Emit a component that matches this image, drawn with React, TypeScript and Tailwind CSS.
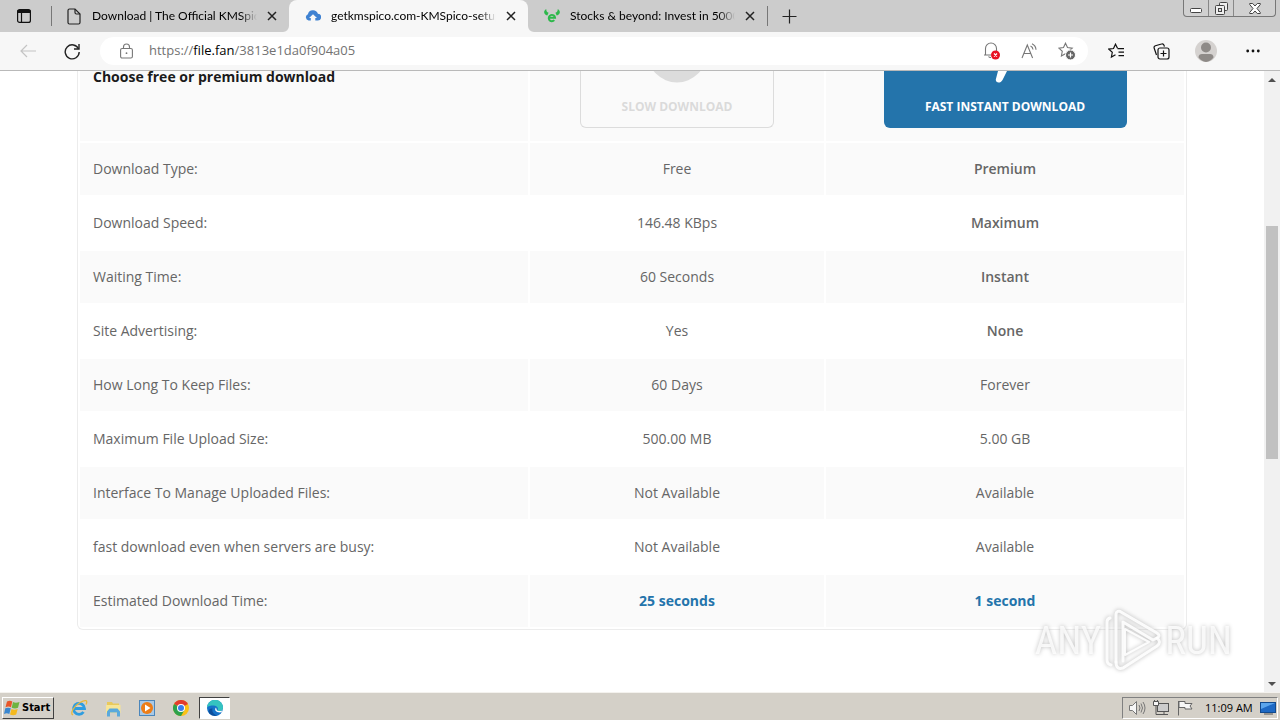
import type { ReactNode } from 'react';

type Row = { label: string; free: string; premium: string; tone?: 'bold' | 'link' };

const rows: Row[] = [
  { label: 'Download Type:', free: 'Free', premium: 'Premium', tone: 'bold' },
  { label: 'Download Speed:', free: '146.48 KBps', premium: 'Maximum', tone: 'bold' },
  { label: 'Waiting Time:', free: '60 Seconds', premium: 'Instant', tone: 'bold' },
  { label: 'Site Advertising:', free: 'Yes', premium: 'None', tone: 'bold' },
  { label: 'How Long To Keep Files:', free: '60 Days', premium: 'Forever' },
  { label: 'Maximum File Upload Size:', free: '500.00 MB', premium: '5.00 GB' },
  { label: 'Interface To Manage Uploaded Files:', free: 'Not Available', premium: 'Available' },
  { label: 'fast download even when servers are busy:', free: 'Not Available', premium: 'Available' },
  { label: 'Estimated Download Time:', free: '25 seconds', premium: '1 second', tone: 'link' },
];

function CloseIcon() {
  return (
    <svg width="10" height="10" viewBox="0 0 10 10" stroke="#222" strokeWidth="1.5">
      <path d="M1 1l8 8M9 1l-8 8" />
    </svg>
  );
}

function Tab({ icon, title, active }: { icon: ReactNode; title: string; active?: boolean }) {
  return (
    <div
      role="tab"
      aria-selected={!!active}
      className={
        active
          ? 'relative flex h-8 w-[239px] items-center rounded-t-lg bg-[#f7f7f7] pr-2.5 pl-4'
          : 'flex h-8 w-[237px] items-center pr-2.5 pl-3.5 last:w-[239px] last:pl-4'
      }
    >
      {active && (
        <>
          <svg className="absolute bottom-0 -left-1.5" width="6" height="6" viewBox="0 0 6 6">
            <path d="M6 0v6H0a6 6 0 0 0 6-6z" fill="#f7f7f7" />
          </svg>
          <svg className="absolute -right-1.5 bottom-0" width="6" height="6" viewBox="0 0 6 6">
            <path d="M0 0v6h6a6 6 0 0 1-6-6z" fill="#f7f7f7" />
          </svg>
        </>
      )}
      <span className="flex w-4 shrink-0 justify-center">{icon}</span>
      <span className="ml-2.5 min-w-0 flex-1 overflow-hidden mask-r-from-90% font-[Lato,'Open_Sans',sans-serif] text-xs whitespace-nowrap">
        {title}
      </span>
      <button aria-label="Close tab" className="ml-2 shrink-0 p-0.5">
        <CloseIcon />
      </button>
    </div>
  );
}

function TabStrip() {
  return (
    <div className="flex h-8 items-center bg-[#cccccc] text-black">
      <button aria-label="Tab actions" className="flex w-[51px] justify-center pr-1">
        <svg width="16" height="16" viewBox="0 0 16 16" fill="none" stroke="#111">
          <rect x="1.6" y="1.6" width="12.8" height="12.8" rx="2" strokeWidth="1.2" />
          <path d="M1.5 3.5h13" strokeWidth="3" />
          <path d="M5.5 4v10.5" strokeWidth="1.2" />
        </svg>
      </button>
      <div className="h-5 w-px bg-[#777]" />
      <div role="tablist" className="flex">
        <Tab
          title="Download | The Official KMSpico"
          icon={
            <svg width="14" height="17" viewBox="0 0 14 17" fill="none" stroke="#222" strokeWidth="1.2">
              <path d="M2.5 1h5.5l5 5v8.5a1.5 1.5 0 0 1-1.5 1.5h-9A1.5 1.5 0 0 1 1 14.500V2.500A1.500 1.500 0 0 1 2.500 1z" />
              <path d="M8 1v3.500A1.500 1.500 0 0 0 9.500 6H13" />
            </svg>
          }
        />
        <Tab
          active
          title="getkmspico.com-KMSpico-setup"
          icon={
            <svg width="16" height="12" viewBox="0 0 16 12">
              <path d="M5.800 10.500H3.600A3.300 3.300 0 0 1 2.900 4.200 5.200 5.200 0 0 1 12.900 3.700 3.400 3.400 0 0 1 12.600 10.500h-2.300V8h1.700L8 4.300 4.100 8h1.700z" fill="#3f82d2" />
            </svg>
          }
        />
        <Tab
          title="Stocks & beyond: Invest in 5000+"
          icon={
            <svg width="16" height="14" viewBox="0 0 16 14">
              <path d="M2.200 0C-.7 2-.7 5 3.300 6.500l1.300-2.700C3 3.300 2.200 2 2.200 0zM13.800 0c2.900 2 2.900 5-1.100 6.500l-1.300-2.700c1.600-.5 2.400-1.800 2.400-3.800z" fill="#2db84b" />
              <path d="M5 8.800h6.100A3.200 3.200 0 1 0 10.300 11.200" fill="none" stroke="#2db84b" strokeWidth="1.900" />
            </svg>
          }
        />
      </div>
      <div className="h-5 w-px bg-[#777]" />
      <button aria-label="New tab" className="ml-3.5">
        <svg width="15" height="15" viewBox="0 0 15 15" stroke="#222" strokeWidth="1.2">
          <path d="M7.500 0.500v14M.5 7.500h14" />
        </svg>
      </button>
      <div className="mr-1 ml-auto flex h-[17px] w-[93px] self-start rounded-b border border-t-0 border-[#777] bg-[#d0d0d0]">
        <button aria-label="Minimize" className="flex w-[25px] items-center justify-center border-r border-[#888] pt-1">
          <svg width="12" height="5" viewBox="0 0 12 5">
            <rect x=".5" y=".5" width="11" height="4" rx="1" fill="#fff" stroke="#444" />
          </svg>
        </button>
        <button aria-label="Restore" className="flex w-[25px] items-center justify-center border-r border-[#888]">
          <svg width="13" height="13" viewBox="0 0 13 13" fill="#eee" stroke="#444">
            <rect x="4.500" y=".5" width="8" height="8" rx="1" />
            <rect x=".5" y="3.500" width="9" height="9" rx="1" />
            <rect x="3.500" y="6.500" width="3" height="3" fill="#ddd" />
          </svg>
        </button>
        <button aria-label="Close" className="flex flex-1 items-center justify-center">
          <svg width="12" height="11" viewBox="0 0 12 11" fill="#fff" stroke="#444">
            <path d="M.7.500h3L6 3 8.300.5h3v1L8 5.500l3.300 4v1h-3L6 8l-2.300 2.500h-3v-1L4 5.500.7 1.500z" />
          </svg>
        </button>
      </div>
    </div>
  );
}

const star = 'M7.500 1.200l2 4.300 4.700.6-3.500 3.200.9 4.700-4.100-2.300L3.400 14l.9-4.700L.8 6.100l4.700-.6z';

function Toolbar() {
  return (
    <div className="flex h-[39px] items-center border-b border-[#b9b9b9] bg-[#f7f7f7] pl-5">
      <button aria-label="Back" disabled>
        <svg width="16" height="14" viewBox="0 0 16 14" fill="none" stroke="#c4c4c4" strokeWidth="1.200">
          <path d="M16 7H1M7 1L1 7l6 6" />
        </svg>
      </button>
      <button aria-label="Refresh" className="ml-7">
        <svg width="16" height="17" viewBox="0 0 16 17" fill="none" stroke="#222" strokeWidth="1.400">
          <path d="M14.600 6A7 7 0 1 0 15.200 9" />
          <path d="M15 1v5h-5" />
        </svg>
      </button>
      <div className="ml-5 flex h-7 flex-1 items-center rounded-full bg-white pr-3 pl-5">
        <svg width="13" height="16" viewBox="0 0 13 16" fill="none" stroke="#777" strokeWidth="1.100">
          <rect x=".6" y="5.500" width="11.800" height="9.500" rx="1.500" />
          <path d="M3.500 5.500V4a3 3 0 0 1 6 0v1.500" />
          <circle cx="6.500" cy="10.200" r=".9" fill="#777" stroke="none" />
        </svg>
        <a href="https://file.fan/3813e1da0f904a05" className="ml-4 text-[13px] text-[#737373]">
          https://<span className="text-black">file.fan</span>/3813e1da0f904a05
        </a>
        <button aria-label="Notifications blocked" className="ml-auto">
          <svg width="18" height="18" viewBox="0 0 18 18" fill="none">
            <path d="M2.500 12.500V6.500a5.500 5.500 0 0 1 11 0v4M1 13h7M5.500 14.500A2.500 2.500 0 0 0 8 15.500" stroke="#777" strokeWidth="1.100" />
            <circle cx="12.500" cy="13" r="4.500" fill="#e81123" />
            <path d="M11 11.500l3 3M14 11.500l-3 3" stroke="#fff" strokeWidth="1.200" />
          </svg>
        </button>
        <button aria-label="Read aloud" className="ml-5">
          <svg width="17" height="16" viewBox="0 0 17 16" fill="none" stroke="#777" strokeWidth="1.100">
            <path d="M1 15L6.300 2 11.600 15M2.800 10.500h7M9.500 3a4 4 0 0 1 2.500 3.500M11 .8a7 7 0 0 1 4 6" />
          </svg>
        </button>
        <button aria-label="Add to favorites" className="ml-5">
          <svg width="18" height="18" viewBox="0 0 18 18" fill="none">
            <path d={star} stroke="#777" strokeWidth="1.100" />
            <circle cx="12.500" cy="13" r="5" fill="#666" stroke="#fff" />
            <path d="M12.500 10.500v5M10 13h5" stroke="#fff" strokeWidth="1.200" />
          </svg>
        </button>
      </div>
      <div className="flex items-center pr-5 pl-5">
        <button aria-label="Favorites">
          <svg width="17" height="16" viewBox="0 0 17 16" fill="none" stroke="#111" strokeWidth="1.200">
            <path d="M9.500 5.300L7.500 1.200l-2 4.300-4.700.6 3.500 3.200-.9 4.700 4.100-2.300" />
            <path d="M9.500 5.600H16M10.500 9.100H16M10.500 12.600H16" />
          </svg>
        </button>
        <button aria-label="Collections" className="ml-7">
          <svg width="17" height="17" viewBox="0 0 17 17" fill="none" stroke="#111" strokeWidth="1.200">
            <path d="M3.500 12L1.200 5.200a2 2 0 0 1 1.200-2.500L8.500 1a2 2 0 0 1 2.500 1.200l.4 1.400" />
            <rect x="5" y="5" width="11" height="11" rx="2" />
            <path d="M10.500 7.500v6M7.500 10.500h6" />
          </svg>
        </button>
        <button aria-label="Profile" className="ml-6">
          <svg width="24" height="24" viewBox="0 0 24 24">
            <circle cx="12" cy="12" r="11" fill="#d5d2d0" />
            <circle cx="12" cy="8.500" r="5" fill="#8e8a87" />
            <path d="M4.500 18.500C4.500 16 6 15 8 15h8c2 0 3.500 1 3.500 3.500A11 11 0 0 1 12 23a11 11 0 0 1-7.500-4.500z" fill="#8e8a87" />
          </svg>
        </button>
        <button aria-label="Settings and more" className="ml-7">
          <svg width="14" height="4" viewBox="0 0 14 4" fill="#111">
            <circle cx="1.700" cy="2" r="1.400" />
            <circle cx="7" cy="2" r="1.400" />
            <circle cx="12.300" cy="2" r="1.400" />
          </svg>
        </button>
      </div>
    </div>
  );
}

function CompareTable() {
  return (
    <div className="mx-auto max-w-[1110px] rounded-b-md border border-t-0 border-[#ececec] bg-white">
      <table className="-mt-0.5 w-full table-fixed border-separate border-spacing-0.5 text-sm text-[#666]">
        <colgroup>
          <col />
          <col className="w-[294px]" />
          <col className="w-[358px]" />
        </colgroup>
        <thead>
          <tr className="h-[70px]">
            <th scope="col" className="bg-[#fafafa] pl-[13px] text-left align-top leading-3 font-bold text-[#1b1b1b]">
              Choose free or premium download
            </th>
            <th scope="col" className="bg-[#fafafa] p-0 align-top">
              <button className="inline-flex h-[57px] w-[194px] flex-col items-center rounded-b-md border border-t-0 border-[#dcdcdc] align-top text-xs font-bold text-[#dadada]">
                <svg width="60" height="12" viewBox="0 18 60 12">
                  <circle cx="30" cy="0" r="29.500" fill="#dcdcdc" />
                </svg>
                <span className="mt-4 leading-4">SLOW DOWNLOAD</span>
              </button>
            </th>
            <th scope="col" className="bg-[#fafafa] p-0 align-top">
              <button className="inline-flex h-[57px] w-[243px] flex-col items-center rounded-b-md bg-[#2474ab] align-top text-xs font-bold text-white">
                <svg width="30" height="12" viewBox="0 0 30 12">
                  <path d="M8 0h9l-4.500 9C10.800 12.500 5.500 12.500 5.800 8.500z" fill="#fff" />
                </svg>
                <span className="mt-4 leading-4">FAST INSTANT DOWNLOAD</span>
              </button>
            </th>
          </tr>
        </thead>
        <tbody>
          {rows.map(({ label, free, premium, tone }) => (
            <tr key={label} className="h-[52px] odd:bg-[#fafafa]">
              <td className="p-0 pl-[13px]">{label}</td>
              <td className={tone === 'link' ? 'p-0 text-center font-bold text-[#2474ab]' : 'p-0 text-center'}>{free}</td>
              <td
                className={
                  tone === 'link'
                    ? 'p-0 text-center font-bold text-[#2474ab]'
                    : tone === 'bold'
                      ? 'p-0 text-center font-semibold'
                      : 'p-0 text-center'
                }
              >
                {premium}
              </td>
            </tr>
          ))}
        </tbody>
      </table>
    </div>
  );
}

function Scrollbar() {
  return (
    <div className="flex w-4 shrink-0 flex-col bg-[#f1f1f1]">
      <button aria-label="Scroll up" className="flex h-[17px] items-center justify-center">
        <svg width="8" height="4" viewBox="0 0 8 4"><path d="M0 4l4-4 4 4z" fill="#505050" /></svg>
      </button>
      <div className="flex-1 px-0.5 pt-[138px]">
        <div className="h-[233px] bg-[#c1c1c1]" />
      </div>
      <button aria-label="Scroll down" className="flex h-[17px] items-center justify-center">
        <svg width="8" height="4" viewBox="0 0 8 4"><path d="M0 0l4 4 4-4z" fill="#505050" /></svg>
      </button>
    </div>
  );
}

function Watermark() {
  return (
    <div className="pointer-events-none absolute right-12 bottom-[19px] flex items-center gap-0.5 font-['Roboto_Condensed','DejaVu_Sans_Condensed',sans-serif] text-[39px] leading-none text-white/80 drop-shadow-[0_0_2px_#b0b0b0]">
      <span>ANY</span>
      <svg width="60" height="64" viewBox="0 0 60 64" fill="none" stroke="#fff" strokeOpacity=".9" strokeWidth="3" strokeLinejoin="round" strokeLinecap="round">
        <path d="M13 53V5a3 3 0 0 1 5-2l36 21q4 3 0 5l-4 2L20 13v39" />
        <path d="M7 9Q4 10 4 13v38q0 4 4 5M13 53q0 8 7 6L54 37q5-4 0-8" />
        <path d="M22 20L46 33 22 46z" strokeWidth="2" />
      </svg>
      <span>RUN</span>
    </div>
  );
}

function Taskbar() {
  return (
    <div className="flex h-7 items-center border-t border-[#f4f2ee] bg-[#d4d0c8] px-0.5 pt-1 pb-px text-[11px] text-black">
      <button className="flex h-[22px] w-[52px] shrink-0 items-center gap-0.5 border border-t-white border-r-[#404040] border-b-[#404040] border-l-white pl-px font-['DejaVu_Sans_Condensed','DejaVu_Sans',sans-serif] text-[11px] font-bold">
        <svg width="16" height="16" viewBox="0 0 16 16">
          <path d="M3 1.500q3-1.500 5.300 0L7 7.300q-2.500-1.500-5.500 0z" fill="#e8562a" />
          <path d="M9 2q2.500 1.500 6.500 0l-1.500 5.700q-3 1.500-6.300 0z" fill="#6eb43f" />
          <path d="M1.300 8.300q2.700-1.300 5.500 0L5.300 14q-2.500-1.500-5.300 0z" fill="#3a87d0" />
          <path d="M7.500 9q2.500 1.300 6.200 0L12.200 14.500q-3 1.400-6.200 0z" fill="#f3b91f" />
        </svg>
        Start
      </button>
      <div className="ml-2 flex items-center">
        <button aria-label="Internet Explorer" className="flex w-[34px] justify-center">
          <svg width="18" height="18" viewBox="0 0 18 18" fill="none">
            <path d="M4.500 9.500h10A5.500 5.500 0 1 0 13.500 13" stroke="#2f9de0" strokeWidth="2.800" />
            <path d="M3 16C-.5 14.500 4 7 10 3.500c6-3.500 8-2 6 2" stroke="#e9b83a" strokeWidth="1.300" />
          </svg>
        </button>
        <button aria-label="File Explorer" className="flex w-[34px] justify-center">
          <svg width="17" height="17" viewBox="0 0 17 17">
            <path d="M2 2h5l1 1.500h6V12H2z" fill="#e9c95b" />
            <path d="M1 5h14.500v8H1z" fill="#f7e596" />
            <path d="M2 16.500v-5L4.500 8.500h8l2.500 3v5h-3v-4H5v4z" fill="#5aa9dc" />
          </svg>
        </button>
        <button aria-label="Media Player" className="flex w-[34px] justify-center">
          <svg width="16" height="16" viewBox="0 0 16 16">
            <rect x=".5" y=".5" width="15" height="15" fill="#a9c9e6" stroke="#4b86bb" />
            <circle cx="8" cy="8" r="6" fill="#ed7d17" />
            <path d="M6 4.500v7L11.500 8z" fill="#fff" />
          </svg>
        </button>
        <button aria-label="Chrome" className="flex w-[34px] justify-center">
          <svg width="16" height="16" viewBox="0 0 16 16">
            <circle cx="8" cy="8" r="8" fill="#fbc116" />
            <path d="M8 8L1.070 4A8 8 0 0 1 14.930 4z" fill="#e33b2e" />
            <path d="M8 8L1.070 4A8 8 0 0 0 8 16l3.500-6z" fill="#2da14c" />
            <circle cx="8" cy="8" r="4" fill="#fff" />
            <circle cx="8" cy="8" r="3" fill="#3b7ded" />
          </svg>
        </button>
        <button aria-label="Edge" className="ml-px flex h-[22px] w-[31px] items-center justify-center border border-t-[#404040] border-r-white border-b-white border-l-[#404040] bg-white">
          <svg width="16" height="16" viewBox="0 0 16 16">
            <circle cx="8" cy="8" r="8" fill="#1572c8" />
            <path d="M0 7.500A8 8 0 0 1 16 8c0 3-4 4-5.500 2.500 1.500-3-1-5-4-5C3.500 5.500 1 6 0 7.500z" fill="#35c3c0" />
            <path d="M9 7.500c-2 2-.5 5.500 5.500 4.800l1.200-2.800H16C15.500 11 11 12 9.800 10z" fill="#fff" />
            <path d="M5.500 8.500c-1 3 1 6.500 5 7A8 8 0 0 1 2 13c-1-3 1-5 3.500-4.500z" fill="#0d4f9c" />
          </svg>
        </button>
      </div>
      <div className="ml-auto flex h-[22px] w-[156px] items-center border border-t-[#808080] border-r-white border-b-white border-l-[#808080] pl-1.5">
        <svg width="17" height="16" viewBox="0 0 17 16" fill="none" stroke="#777">
          <path d="M.5 5.500h3l4-4v13l-4-4h-3z" fill="#f6f6f6" />
          <path d="M10 5q2 3 0 6M12 3.500q3 4.500 0 9M14 2q4 6 0 12" />
        </svg>
        <svg className="ml-[7px]" width="16" height="16" viewBox="0 0 16 16" fill="#f6f6f6" stroke="#555">
          <rect x="4.500" y="3.500" width="11" height="8" fill="#ccc" />
          <path d="M7 14.500h8M11 12v2M.5 1.500h5v4h-5zM1.500 0v2M4.500 0v2" />
          <path d="M3 6v8.500h4" fill="none" />
        </svg>
        <svg className="ml-2" width="16" height="16" viewBox="0 0 16 16" fill="#f6f6f6" stroke="#666">
          <path d="M1.500 1v14.500M2 1.500h6v2h7L13 6l2 3H8V7.500H2z" />
        </svg>
        <time className="ml-3 whitespace-nowrap">11:09 AM</time>
        <svg className="mr-px ml-auto shrink-0" width="16" height="14" viewBox="0 0 16 14">
          <rect x=".5" y="1.500" width="15" height="10" fill="#1e69c4" stroke="#124a8d" />
          <path d="M1 2h14L1 8z" fill="#5ba5ec" />
          <path d="M4 13h9" stroke="#555" />
        </svg>
      </div>
    </div>
  );
}

export default function App() {
  return (
    <div className="flex h-screen flex-col overflow-hidden bg-white font-['Open_Sans','Noto_Sans',sans-serif]">
      <TabStrip />
      <Toolbar />
      <div className="relative flex min-h-0 flex-1">
        <main className="min-w-0 flex-1 overflow-hidden bg-white">
          <CompareTable />
        </main>
        <Scrollbar />
        <Watermark />
      </div>
      <Taskbar />
    </div>
  );
}
